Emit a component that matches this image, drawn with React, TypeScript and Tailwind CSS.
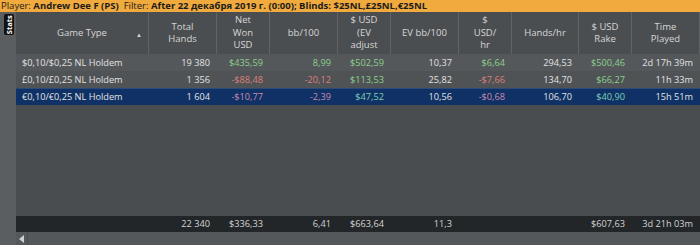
import React from "react";

type Cell = { v: string; c?: "g" | "r" };

const cols = [
  { w: "w-[133px]", label: ["Game Type"] },
  { w: "w-[68px]", label: ["Total", "Hands"] },
  { w: "w-[53px]", label: ["Net", "Won", "USD"] },
  { w: "w-[68px]", label: ["bb/100"] },
  { w: "w-[53px]", label: ["$ USD", "(EV", "adjust"] },
  { w: "w-[68px]", label: ["EV bb/100"] },
  { w: "w-[53px]", label: ["$", "USD/", "hr"] },
  { w: "w-[67px]", label: ["Hands/hr"] },
  { w: "w-[53px]", label: ["$ USD", "Rake"] },
  { w: "w-[68px]", label: ["Time", "Played"] },
];

const rows: Cell[][] = [
  [
    { v: "$0,10/$0,25 NL Holdem" },
    { v: "19 380" },
    { v: "$435,59", c: "g" },
    { v: "8,99", c: "g" },
    { v: "$502,59", c: "g" },
    { v: "10,37" },
    { v: "$6,64", c: "g" },
    { v: "294,53" },
    { v: "$500,46", c: "g" },
    { v: "2d 17h 39m" },
  ],
  [
    { v: "£0,10/£0,25 NL Holdem" },
    { v: "1 356" },
    { v: "-$88,48", c: "r" },
    { v: "-20,12", c: "r" },
    { v: "$113,53", c: "g" },
    { v: "25,82" },
    { v: "-$7,66", c: "r" },
    { v: "134,70" },
    { v: "$66,27", c: "g" },
    { v: "11h 33m" },
  ],
  [
    { v: "€0,10/€0,25 NL Holdem" },
    { v: "1 604" },
    { v: "-$10,77", c: "r" },
    { v: "-2,39", c: "r" },
    { v: "$47,52", c: "g" },
    { v: "10,56" },
    { v: "-$0,68", c: "r" },
    { v: "106,70" },
    { v: "$40,90", c: "g" },
    { v: "15h 51m" },
  ],
];

const totals = ["", "22 340", "$336,33", "6,41", "$663,64", "11,3", "", "", "$607,63", "3d 21h 03m"];

function color(c: Cell["c"], sel: boolean) {
  if (c === "g") return sel ? "text-[#7fd0b4]" : "text-[#8cd08c]";
  if (c === "r") return sel ? "text-[#c98bb0]" : "text-[#dc7f78]";
  return "text-[#e2e2e2]";
}

export default function App() {
  return (
    <div
      className="w-[700px] h-[245px] flex flex-col bg-[#4a4d50] overflow-hidden"
      style={{ fontFamily: '"Open Sans", "Noto Sans", sans-serif' }}
    >
      <div className="h-[12px] bg-[#f1aa3e] text-[#1b1b1b] text-[9.5px] leading-[12px] pl-[1px] whitespace-nowrap">
        Player: <b>Andrew Dee F (PS)</b>&nbsp; Filter: <b>After 22 декабря 2019 г. (0:00); Blinds: $25NL,£25NL,€25NL</b>
      </div>
      <div className="flex flex-1 min-h-0">
        <div className="w-[16px] bg-[#5b5e61] pt-[2px] pl-[4px]">
          <div className="w-[10px] h-[21px] bg-[#111] rounded-[2px] flex items-center justify-center">
            <span className="-rotate-90 text-white text-[7.5px] font-bold leading-none">Stats</span>
          </div>
        </div>
        <div className="flex-1 flex flex-col min-w-0">
          <div className="h-[42px] flex bg-[#4b4e51] text-[#d6d6d6] text-[9.5px] leading-[12.5px]">
            {cols.map((c, i) => (
              <div
                key={i}
                className={`${c.w} shrink-0 relative flex items-center justify-center text-center border-r border-[#606366] overflow-hidden`}
              >
                <div className="flex flex-col">
                  {c.label.map((l) => (
                    <span key={l}>{l}</span>
                  ))}
                </div>
                {i === 0 && (
                  <span className="absolute right-[6px] top-[17px] text-[6px] text-[#d6d6d6]">▲</span>
                )}
              </div>
            ))}
          </div>
          <div className="flex flex-col text-[9.2px]">
            {rows.map((r, ri) => {
              const sel = ri === 2;
              return (
                <div
                  key={ri}
                  className={`h-[17px] flex items-center ${
                    sel
                      ? "bg-[#0f3165] border-t border-[#2b4b7b]"
                      : ri === 0
                      ? "bg-[#55585b]"
                      : "bg-[#505356]"
                  }`}
                >
                  {r.map((cell, ci) => (
                    <div
                      key={ci}
                      className={`${cols[ci].w} shrink-0 whitespace-nowrap ${
                        ci === 0 ? "pl-[6px] text-left" : "pr-[7px] text-right"
                      } ${color(cell.c, sel)}`}
                    >
                      {cell.v}
                    </div>
                  ))}
                </div>
              );
            })}
          </div>
          <div className="flex-1" />
          <div className="h-[16px] bg-[#222629] flex items-center text-[9.2px] text-[#d4d4d4]">
            {totals.map((t, i) => (
              <div key={i} className={`${cols[i].w} shrink-0 whitespace-nowrap text-right pr-[7px]`}>
                {t}
              </div>
            ))}
          </div>
          <div className="h-[13px] bg-[#55585b] flex">
            <div className="w-[12px] flex items-center justify-center border-r border-[#4a4d50]">
              <span className="w-0 h-0 border-y-[4px] border-y-transparent border-r-[5px] border-r-[#d0d0d0]" />
            </div>
          </div>
        </div>
      </div>
    </div>
  );
}
